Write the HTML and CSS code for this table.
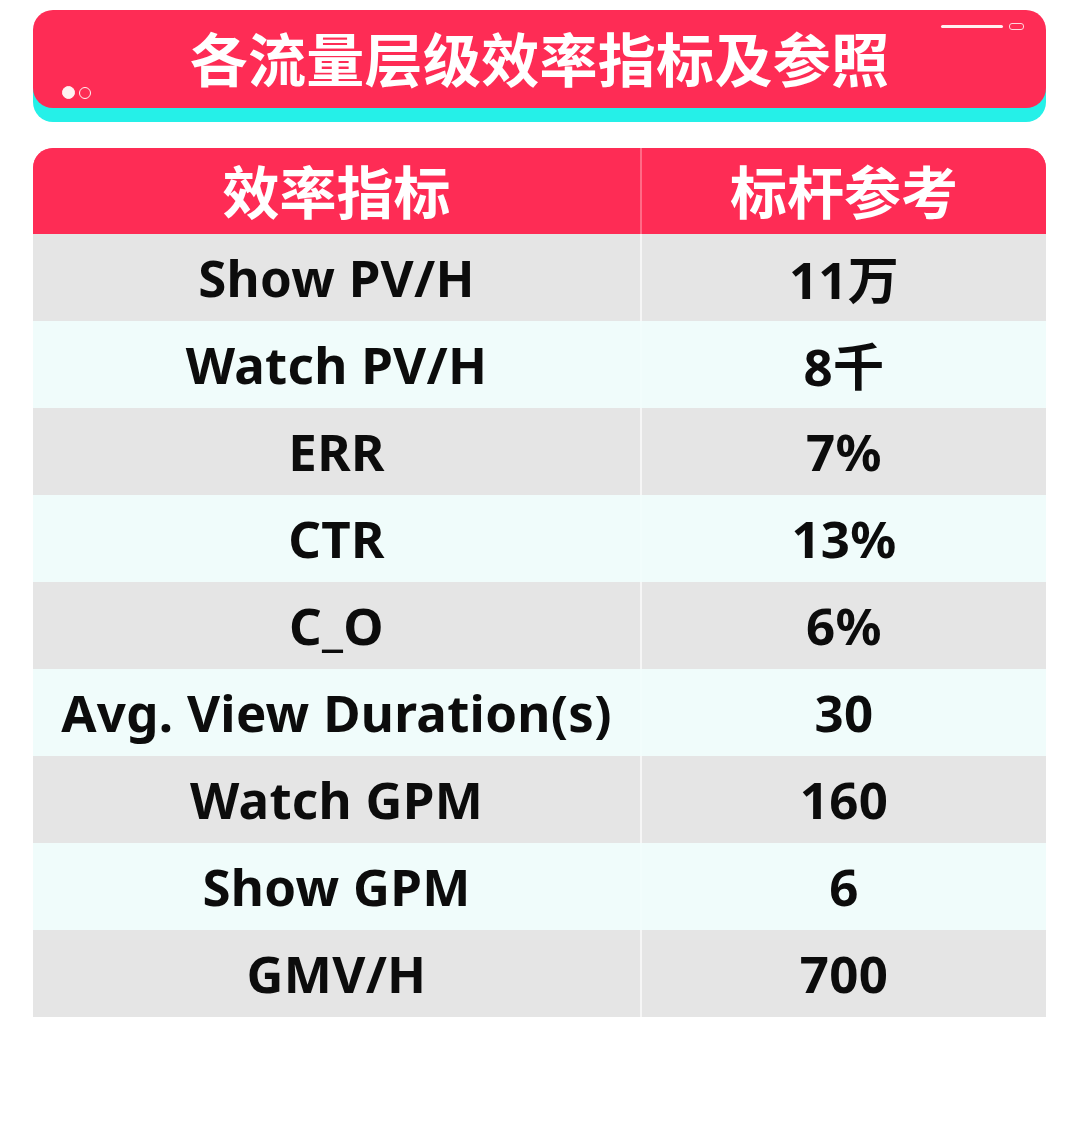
FILE: index.html
```html
<!DOCTYPE html>
<html lang="zh">
<head>
<meta charset="utf-8">
<link rel="stylesheet" href="styles.css">
</head>
<body>
<div class="page">
  <div class="banner">
    <div class="dots"><span class="dot on"></span><span class="dot"></span></div>
    <div class="deco"><span class="bar"></span><span class="pill"></span></div>
    <h1 class="title">各流量层级效率指标及参照</h1>
  </div>
  <div class="table">
    <div class="row head"><div class="cell">效率指标</div><div class="cell">标杆参考</div></div>
    <div class="row gray"><div class="cell">Show PV/H</div><div class="cell">11万</div></div>
    <div class="row cyan"><div class="cell">Watch PV/H</div><div class="cell">8千</div></div>
    <div class="row gray"><div class="cell">ERR</div><div class="cell">7%</div></div>
    <div class="row cyan"><div class="cell">CTR</div><div class="cell">13%</div></div>
    <div class="row gray"><div class="cell">C_O</div><div class="cell">6%</div></div>
    <div class="row cyan"><div class="cell">Avg. View Duration(s)</div><div class="cell">30</div></div>
    <div class="row gray"><div class="cell">Watch GPM</div><div class="cell">160</div></div>
    <div class="row cyan"><div class="cell">Show GPM</div><div class="cell">6</div></div>
    <div class="row gray"><div class="cell">GMV/H</div><div class="cell">700</div></div>
  </div>
</div>
</body>
</html>
```
FILE: styles.css
```css
html, body {
  margin: 0;
  padding: 0;
  background: #ffffff;
}
.page {
  width: 1013px;
  margin-left: 33px;
  padding-top: 10px;
  font-family: "Noto Sans", "Noto Sans CJK SC", sans-serif;
}
.banner {
  position: relative;
  height: 98px;
  background: #fe2c55;
  border-radius: 20px;
  box-shadow: 0 14px 0 0 #25f0e8;
  display: flex;
  align-items: center;
  justify-content: center;
}
.title {
  margin: 0;
  color: #ffffff;
  font-family: "Noto Sans CJK SC", sans-serif;
  font-weight: 700;
  font-size: 58px;
  line-height: 1;
  letter-spacing: 0.3px;
  padding-bottom: 4px;
}
.dots {
  position: absolute;
  left: 29px;
  bottom: 9px;
  display: flex;
  align-items: center;
  gap: 4px;
}
.dot {
  width: 12px;
  height: 12px;
  border-radius: 50%;
  border: 1.5px solid #fff3f3;
  box-sizing: border-box;
}
.dot.on {
  background: #fff3f3;
  width: 13px;
  height: 13px;
}
.deco {
  position: absolute;
  right: 22px;
  top: 13px;
  display: flex;
  align-items: center;
  gap: 6px;
}
.bar {
  width: 62px;
  height: 3px;
  border-radius: 2px;
  background: #fff0f0;
}
.pill {
  width: 13px;
  height: 5px;
  border-radius: 3px;
  border: 1.5px solid #ffd6dd;
}
.table {
  margin-top: 40px;
  border-radius: 20px 20px 0 0;
  overflow: hidden;
}
.row {
  display: grid;
  grid-template-columns: 607px 404px;
  column-gap: 2px;
  height: 87px;
  background: #f6f6f6;
}
.row.head {
  height: 86px;
  background: #ff6a86;
}
.cell {
  display: flex;
  align-items: center;
  justify-content: center;
  font-weight: 700;
  font-size: 51px;
  letter-spacing: 0.3px;
  color: #0c0c0c;
  padding-bottom: 2px;
}
.head .cell {
  background: #fe2c55;
  color: #ffffff;
  font-family: "Noto Sans CJK SC", sans-serif;
  font-size: 57px;
  letter-spacing: 0;
  padding-bottom: 6px;
}
.gray .cell {
  background: #e5e5e5;
}
.cyan {
  background: #f2fdfc;
}
.cyan .cell {
  background: #f0fcfb;
}
```
